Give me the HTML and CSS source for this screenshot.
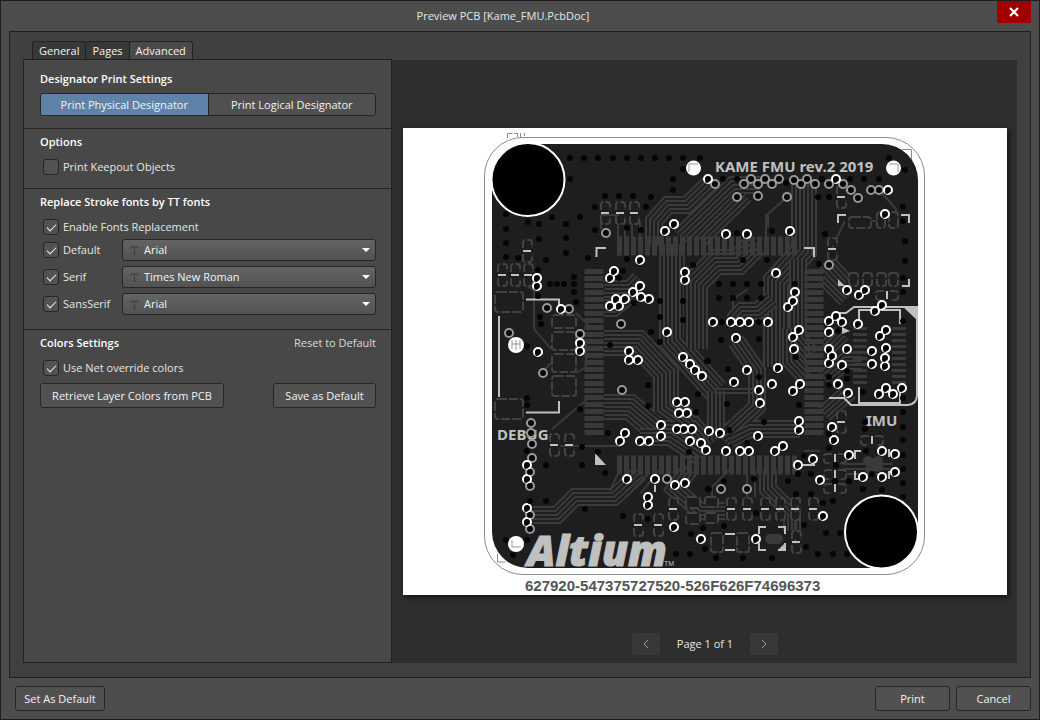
FILE: index.html
```html
<!DOCTYPE html>
<html lang="en">
<head>
    <meta charset="UTF-8">
    <meta name="viewport" content="width=device-width, initial-scale=1.0">
    <title>Preview PCB [Kame_FMU.PcbDoc]</title>
    <link rel="stylesheet" href="styles.css">
</head>
<body>
    <header class="titlebar">
        <h1>Preview PCB [Kame_FMU.PcbDoc]</h1>
        <button class="close" aria-label="Close">
            <svg width="10" height="10" viewBox="0 0 10 10"><path d="M1 1l8 8M9 1l-8 8"/></svg>
        </button>
    </header>

    <main class="content">
        <div class="settings">
            <div class="tabs" role="tablist">
                <button class="tab" role="tab">General</button>
                <button class="tab" role="tab">Pages</button>
                <button class="tab active" role="tab" aria-selected="true">Advanced</button>
            </div>
            <div class="panel">
                <section class="first">
                    <h2>Designator Print Settings</h2>
                    <div class="segmented">
                        <button class="selected">Print Physical Designator</button>
                        <button>Print Logical Designator</button>
                    </div>
                </section>
                <section class="options">
                    <h2>Options</h2>
                    <label class="check"><input type="checkbox">Print Keepout Objects</label>
                </section>
                <section class="fonts">
                    <h2>Replace Stroke fonts by TT fonts</h2>
                    <label class="check"><input type="checkbox" checked>Enable Fonts Replacement</label>
                    <div class="font-rows">
                        <div class="font-row">
                            <label class="check"><input type="checkbox" checked>Default</label>
                            <div class="select">
                                <svg class="tt" width="9" height="9" viewBox="0 0 9 9"><path d="M1 3V1h7v2M4.500 1v7M3 8h3"/></svg>
                                <select aria-label="Default font"><option>Arial</option></select>
                            </div>
                        </div>
                        <div class="font-row">
                            <label class="check"><input type="checkbox" checked>Serif</label>
                            <div class="select">
                                <svg class="tt" width="9" height="9" viewBox="0 0 9 9"><path d="M1 3V1h7v2M4.500 1v7M3 8h3"/></svg>
                                <select aria-label="Serif font"><option>Times New Roman</option></select>
                            </div>
                        </div>
                        <div class="font-row">
                            <label class="check"><input type="checkbox" checked>SansSerif</label>
                            <div class="select">
                                <svg class="tt" width="9" height="9" viewBox="0 0 9 9"><path d="M1 3V1h7v2M4.500 1v7M3 8h3"/></svg>
                                <select aria-label="SansSerif font"><option>Arial</option></select>
                            </div>
                        </div>
                    </div>
                </section>
                <section class="colors">
                    <div class="heading-row">
                        <h2>Colors Settings</h2>
                        <a href="#">Reset to Default</a>
                    </div>
                    <label class="check"><input type="checkbox" checked>Use Net override colors</label>
                    <div class="button-row">
                        <button class="btn retrieve">Retrieve Layer Colors from PCB</button>
                        <button class="btn save">Save as Default</button>
                    </div>
                </section>
            </div>
        </div>

        <div class="preview">
            <div class="sheet">
                <svg class="board" viewBox="403 129 604 467">
                    <defs>
                        <!-- two-pad part with a silk bar -->
                        <g id="cap">
                            <path class="pad" d="M-4-3v-5q0-3 3-3h3q3 0 3 3v5M-4 3v5q0 3 3 3h3q3 0 3-3V3"/>
                            <path class="silk" d="M-4 0h8"/>
                        </g>
                        <g id="capv">
                            <path class="pad" d="M-3-4h-5q-3 0-3 3v3q0 3 3 3h5M3-4h5q3 0 3 3v3q0 3-3 3H3"/>
                            <path class="silk" d="M0-4v8"/>
                        </g>
                        <path id="copper" d="M528 145H882A36 36 0 0 1 918 181V533A36 36 0 0 1 882 569H528A36 36 0 0 1 492 533V181A36 36 0 0 1 528 145Z"/>
                        <clipPath id="edge"><use href="#copper"/></clipPath>

                        <!-- trace bundles -->
                        <path id="wide" d="M604 344H638L666 374V408L690 424M672 245V342L716 392M695 350V284L716 263H738L756 245M804 180V252L776 282V368M604 408H630L656 430H692L708 448"/>
                        <path id="mid" d="M654 247V222L668 206H687L712 182M680 237L733 186H760M700 240L745 196M533 516H557L575 498H614L640 474M604 290H630L640 280M604 309H614L632 294M772 300L758 312H742L733 322M798 260V340L812 356M791 330V362L806 378M768 470V490L792 514V532M826 262L846 284M824 278L846 300M824 380L846 362H862M826 350L842 334M640 438H670L700 458M722 440L757 408V372L736 342M824 415L850 392M690 470L675 490L700 512H725M716 392V440M730 440L750 430H800"/>
                        <path id="thin" d="M524 284L534 292V330L551 350M560 447H620M552 430L590 398M576 314L588 326M555 360L545 370M576 374L586 368V345M714 390H758M714 394H758M748 290L733 300V310M768 228V215L787 198M766 245V215M880 192L896 210V220M845 222L838 236L832 250M860 222H878M601 230V216H618V257M625 228V255M632 222V255M640 222V255M755 470V498M747 475V500M730 470L712 488V500M804 452H820M843 470H890M843 465H892M843 475H888M795 516V545M620 470L610 492M648 475L632 492M660 470L640 495"/>

                        <path id="greyVias" d="M715 185h0M744 185h0M751 180h0M758 185h0M765 180h0M772 185h0M779 180h0M794 181h0M801 185h0M807 180h0M815 185h0M829 185h0M843 185h0M851 191h0M858 199h0M871 191h0M879 191h0M737 198h0M758 197h0M787 198h0M606 234h0M547 309h0M569 310h0M509 334h0M543 374h0M621 325h0M622 391h0M531 424h0M531 434h0M532 445h0M532 459h0M530 473h0M530 487h0M530 516h0M530 530h0M580 335h0M721 490h0M747 490h0M667 480h0M829 266h0"/>
                        <path id="vias" d="M665 232h0M674 225h0M640 261h0M614 272h0M610 279h0M685 273h0M685 281h0M708 180h0M537 279h0M836 180h0M888 191h0M885 215h0M726 235h0M747 235h0M790 232h0M776 274h0
                            M537 287h0M640 287h0M633 293h0M641 298h0M649 300h0M625 300h0M616 300h0M610 307h0M619 307h0M561 310h0M580 344h0M580 352h0M538 353h0M629 352h0M629 361h0M638 361h0M667 333h0M683 358h0M690 365h0M695 371h0M702 377h0M677 403h0M685 403h0M679 414h0M687 414h0M677 430h0M684 430h0M692 430h0M661 426h0M661 437h0M625 434h0M709 432h0
                            M795 293h0M793 302h0M788 308h0M713 323h0M731 323h0M740 323h0M749 323h0M768 323h0M736 339h0M799 331h0M793 338h0M794 350h0M778 369h0M747 371h0M734 383h0M772 385h0M800 385h0M793 392h0M759 391h0M760 404h0M799 422h0M799 431h0M720 434h0M758 437h0
                            M847 291h0M865 291h0M859 296h0M836 317h0M829 322h0M842 323h0M829 333h0M858 325h0M886 331h0M880 337h0M829 350h0M847 350h0M832 357h0M829 364h0M842 366h0M872 352h0M886 349h0M872 365h0M885 359h0M885 367h0M838 385h0M848 394h0M886 389h0M902 389h0M879 395h0M893 395h0M832 428h0M834 441h0M875 312h0M882 306h0
                            M620 442h0M640 442h0M649 442h0M690 442h0M701 444h0M706 451h0M627 480h0M655 480h0M675 486h0M685 484h0M648 498h0M648 506h0M674 528h0M701 540h0M527 466h0M527 480h0M527 509h0M527 523h0
                            M726 452h0M740 452h0M749 452h0M775 452h0M783 447h0M813 460h0M798 466h0M820 481h0M849 456h0M882 452h0M895 455h0M895 473h0M882 478h0M863 478h0M823 517h0M756 540h0"/>
                    </defs>

                    <path class="outline" d="M523 138.500H886A38.500 38.500 0 0 1 924.500 177V537A38.500 38.500 0 0 1 886 575.500H523A38.500 38.500 0 0 1 484.500 537V177A38.500 38.500 0 0 1 523 138.500Z"/>
                    <path class="outline" d="M507.500 139V134.500h5M514 134.500h4M517.500 134v4M520.500 134v5M524.500 134v3M902 150.500h9.500v10M497.500 555v8h8"/>
                    <use href="#copper" class="copper"/>

                    <g clip-path="url(#edge)">
                        <use href="#wide" class="trace w26"/>
                        <use href="#wide" class="gap w22"/>
                        <use href="#wide" class="trace w18"/>
                        <use href="#wide" class="gap w14"/>
                        <use href="#wide" class="trace w10"/>
                        <use href="#wide" class="gap w6"/>
                        <use href="#wide" class="trace w2"/>
                        <use href="#mid" class="trace w18"/>
                        <use href="#mid" class="gap w14"/>
                        <use href="#mid" class="trace w10"/>
                        <use href="#mid" class="gap w6"/>
                        <use href="#mid" class="trace w2"/>
                        <use href="#thin" class="trace w2"/>

                        <!-- controller pads -->
                        <path class="pins" d="M594 270V438M814 270V438"/>
                        <path class="pins" d="M617 247H797M617 466H797"/>
                        <path class="pins fine" d="M860 328V386M899 328V386"/>

                        <!-- connectors and passives -->
                        <g class="pad">
                            <rect x="495" y="293" width="28" height="20" rx="3"/>
                            <rect x="495" y="400" width="28" height="20" rx="3"/>
                            <rect x="552" y="316" width="24" height="13" rx="3"/>
                            <rect x="552" y="333" width="24" height="18" rx="3"/>
                            <rect x="552" y="355" width="24" height="18" rx="3"/>
                            <rect x="552" y="377" width="24" height="20" rx="3"/>
                            <rect x="849" y="218" width="22" height="11" rx="3"/>
                            <rect x="877" y="213" width="8" height="16" rx="3"/>
                            <rect x="889" y="213" width="9" height="16" rx="3"/>
                            <rect x="849" y="274" width="9" height="13" rx="3"/>
                            <rect x="863" y="274" width="9" height="13" rx="3"/>
                            <rect x="877" y="274" width="9" height="13" rx="3"/>
                            <rect x="889" y="274" width="9" height="13" rx="3"/>
                            <rect x="711" y="534" width="12" height="19" rx="2"/>
                            <rect x="737" y="534" width="12" height="19" rx="2"/>
                            <rect x="686" y="498" width="14" height="11" rx="2"/>
                            <rect x="686" y="514" width="14" height="11" rx="2"/>
                            <rect x="705" y="498" width="13" height="10" rx="2"/>
                            <rect x="705" y="514" width="13" height="10" rx="2"/>
                        </g>
                        <use href="#cap" x="605" y="214"/>
                        <use href="#cap" x="620" y="214"/>
                        <use href="#cap" x="634" y="214"/>
                        <use href="#cap" x="527" y="252"/>
                        <use href="#cap" x="502" y="276"/>
                        <use href="#cap" x="515" y="276"/>
                        <use href="#cap" x="528" y="276"/>
                        <use href="#cap" x="841" y="198"/>
                        <use href="#cap" x="832" y="250"/>
                        <use href="#cap" x="841" y="423"/>
                        <use href="#cap" x="554" y="446"/>
                        <use href="#cap" x="569" y="446"/>
                        <use href="#cap" x="638" y="526"/>
                        <use href="#cap" x="658" y="526"/>
                        <use href="#cap" x="673" y="510"/>
                        <use href="#cap" x="731" y="510"/>
                        <use href="#cap" x="747" y="510"/>
                        <use href="#cap" x="765" y="510"/>
                        <use href="#cap" x="780" y="510"/>
                        <use href="#cap" x="795" y="510"/>
                        <use href="#cap" x="813" y="510"/>
                        <use href="#cap" x="796" y="543"/>
                        <use href="#capv" x="835" y="459"/>
                        <use href="#capv" x="835" y="475"/>
                        <use href="#capv" x="835" y="489"/>
                        <use href="#capv" x="872" y="441"/>
                        <use href="#capv" x="887" y="296"/>
                        <path class="blob" d="M770 540h8M868 462l10 6M878 462l-8 8"/>

                        <!-- silkscreen -->
                        <path class="silk" d="M526 300.500H559V310M499 317V398M526 413.500H559V402M596.500 258V249H606M804 249H814V258M838 224V216H846M901 216H909V224M909 280V287H902M759 535V528H766M778 528H785V535M759 544V551H766M778 551H785V544M725 535H735M725 551H735M655 486V493M855 460V452H861M855 472V480H861M889 450V458M889 472V480M803 466H815"/>
                        <path class="silk" d="M829 399H844L851 406H908Q917 405 917 396V310M837 314H846L854 308H917M859 325V311H900V325M859 388V404H900V388"/>
                        <path class="silk-fill" d="M902 307H918V322ZM838 280V287H845ZM595 454V466H606ZM842 328V335L850 332ZM785 544V551H778Z"/>
                        <text class="silk-text" x="715" y="173">KAME FMU rev.2 2019</text>
                        <text class="silk-text" x="497" y="441">DEBUG</text>
                        <text class="silk-text" x="866" y="427">IMU</text>

                        <use href="#greyVias" class="ring grey"/>
                        <use href="#vias" class="ring"/>
                        <use href="#greyVias" class="drill"/>
                        <use href="#vias" class="drill"/>
                        <use href="#vias" class="nick" x="-1" y="2"/>

                        <path class="drill" d="M570 159h0M584 159h0M598 159h0M613 159h0M627 159h0M641 159h0M655 159h0M669 159h0M683 159h0M700 159h0M683 170h0M673 180h0M673 191h0M570 180h0M605 197h0M619 197h0M633 197h0M651 198h0M646 208h0M595 208h0M506 215h0M528 223h0M539 225h0M552 218h0M580 218h0M566 225h0M506 230h0M539 240h0M566 239h0M506 244h0M566 254h0M506 258h0M518 259h0M546 261h0M588 259h0M595 231h0M627 229h0M641 231h0M627 260h0M538 271h0M623 272h0M574 278h0M693 266h0M619 279h0
                            M889 159h0M905 171h0M723 180h0M737 180h0M822 180h0M850 180h0M864 180h0M879 180h0M786 184h0M818 198h0M829 198h0M903 208h0M903 222h0M905 242h0M905 262h0M825 235h0M772 232h0M737 234h0M743 261h0M767 261h0M819 265h0M903 279h0
                            M550 285h0M557 285h0M564 285h0M574 285h0M574 293h0M576 303h0M540 318h0M541 325h0M527 347h0M610 346h0M660 302h0M683 302h0M660 318h0M683 321h0M651 333h0M660 343h0M634 304h0M708 362h0M648 386h0M698 395h0M648 407h0M580 410h0M527 399h0M527 406h0M608 434h0M696 413h0M538 297h0
                            M719 285h0M733 285h0M747 285h0M761 285h0M719 299h0M733 299h0M747 299h0M761 299h0M795 285h0M722 323h0M759 323h0M721 341h0M759 340h0M707 362h0M728 370h0M759 378h0M727 405h0M799 406h0M764 423h0M729 431h0M796 358h0M829 378h0M847 372h0M847 380h0M829 386h0M903 293h0M903 322h0M838 332h0M903 399h0M903 413h0M903 428h0M865 423h0M865 430h0M829 435h0M863 393h0
                            M527 452h0M598 453h0M582 448h0M546 466h0M582 466h0M605 474h0M530 502h0M546 502h0M585 510h0M623 517h0M648 520h0M506 541h0M527 541h0M513 556h0M563 541h0M676 555h0M690 555h0M705 550h0M691 535h0M703 529h0M689 453h0M708 490h0
                            M747 444h0M811 475h0M804 457h0M798 475h0M788 482h0M754 480h0M724 482h0M709 490h0M796 495h0M811 495h0M823 504h0M833 502h0M756 514h0M724 527h0M804 526h0M826 534h0M840 534h0M806 548h0M818 555h0M833 555h0M847 555h0M716 559h0M743 559h0M772 559h0M829 449h0M836 466h0M835 482h0M849 482h0M863 490h0M882 491h0M903 441h0M903 456h0M903 470h0M903 484h0M903 498h0M866 452h0M872 475h0"/>
                    </g>

                    <!-- fiducials and mounting holes -->
                    <g class="fiducial">
                        <circle cx="693.500" cy="169" r="7.500"/>
                        <circle cx="893.500" cy="169" r="7.500"/>
                        <circle cx="516" cy="346" r="8"/>
                        <circle cx="516" cy="545" r="8"/>
                        <path d="M689 173v-8h9M889 165h9v8M512 541v7h9M512 341v9M516 341v10M520 341v9M512 345h8"/>
                    </g>
                    <circle class="hole" cx="528" cy="180.500" r="36.500"/>
                    <circle class="hole" cx="881.500" cy="533" r="36.500"/>

                    <text class="logo" x="527" y="567">Altium</text>
                    <text class="tm" x="664" y="567">TM</text>
                    <text class="serial" x="525" y="592">627920-547375727520-526F626F74696373</text>
                </svg>
            </div>
            <div class="pager">
                <button aria-label="Previous page"><svg width="6" height="10" viewBox="0 0 6 10"><path d="M5 1L1 5l4 4"/></svg></button>
                <span>Page 1 of 1</span>
                <button aria-label="Next page"><svg width="6" height="10" viewBox="0 0 6 10"><path d="M1 1l4 4-4 4"/></svg></button>
            </div>
        </div>
    </main>

    <footer class="footer">
        <button class="btn set-default">Set As Default</button>
        <button class="btn action">Print</button>
        <button class="btn action">Cancel</button>
    </footer>
</body>
</html>
```
FILE: styles.css
```css
* {
    box-sizing: border-box;
}
body {
    margin: 0;
    min-height: 100vh;
    display: flex;
    flex-direction: column;
    border: 1px solid #1e1e1e;
    background-color: #4d4d4d;
    color: #e6e6e6;
    font-family: "Open Sans", "Noto Sans", sans-serif;
    font-size: 11px;
    line-height: 20px;
}
button, select {
    font: inherit;
    color: #f2f2f2;
    margin: 0;
    padding: 0;
}
svg {
    display: block;
}
.titlebar {
    display: flex;
    height: 30px;
    padding: 0 8px;
}
.titlebar h1 {
    flex: 1;
    margin: 0;
    font-size: 11px;
    font-weight: normal;
    line-height: 30px;
    text-align: center;
}
.close {
    width: 34px;
    height: 22px;
    border: none;
    border-radius: 0 0 2px 2px;
    background-color: #a00000;
    display: flex;
    align-items: center;
    justify-content: center;
}
.close path {
    stroke: #fff;
    stroke-width: 2;
}

.content {
    flex: 1;
    display: grid;
    grid-template-columns: 369px 1fr;
    margin: 0 8px;
    padding: 9px 13px 14px;
    border: 1px solid #1f1f1f;
    background-color: #404040;
}
.settings {
    display: flex;
    flex-direction: column;
}
.tabs {
    display: flex;
    height: 18px;
    padding-left: 9px;
}
.tab {
    padding: 0 6px;
    border: 1px solid #222;
    border-bottom: none;
    border-radius: 3px 3px 0 0;
    background-color: #383838;
    line-height: 18px;
}
.tab + .tab {
    margin-left: -1px;
}
.tab.active {
    background-color: #4a4a4a;
}
.panel {
    flex: 1;
    border: 1px solid #222;
    background-color: #484848;
}
section {
    padding: 3px 15px 0 16px;
    border-bottom: 1px solid #242424;
}
.first {
    padding-top: 9px;
    padding-bottom: 12px;
}
.options {
    padding-bottom: 11px;
}
.fonts {
    padding-bottom: 14px;
}
.colors {
    border-bottom: none;
}
h2 {
    margin: 0;
    font-size: 11px;
    font-weight: 600;
    line-height: 20px;
    color: #fff;
}
.segmented {
    display: flex;
    height: 23px;
    margin-top: 4px;
    border: 1px solid #262626;
    border-radius: 3px;
    overflow: hidden;
}
.segmented button {
    flex: 1;
    border: none;
    background-color: #505050;
}
.segmented .selected {
    background-color: #5f83a8;
    border-right: 1px solid #262626;
}
.check {
    display: flex;
    align-items: center;
    height: 20px;
    gap: 4px;
    padding-left: 3px;
}
h2 + .check, .heading-row + .check {
    margin-top: 5px;
}
.check input {
    appearance: none;
    width: 16px;
    height: 16px;
    margin: 0;
    border: 1px solid #262626;
    border-radius: 3px;
    background-color: #525252;
}
.check input:checked::after {
    content: "";
    display: block;
    width: 8px;
    height: 4px;
    margin: 4px 3px;
    border-left: 1px solid #f0f0f0;
    border-bottom: 1px solid #f0f0f0;
    transform: rotate(-45deg);
}
.font-rows {
    display: grid;
    gap: 5px;
    margin-top: 2px;
}
.font-row {
    display: grid;
    grid-template-columns: 82px 1fr;
    align-items: center;
}
.select {
    position: relative;
}
.select select {
    display: block;
    appearance: none;
    width: 100%;
    height: 22px;
    padding: 0 22px 0 21px;
    border: 1px solid #262626;
    border-radius: 3px;
    background: linear-gradient(#646464, #525252);
}
.select .tt {
    position: absolute;
    left: 8px;
    top: 7px;
    fill: none;
    stroke: #3c3c3c;
}
.select::after {
    content: "";
    position: absolute;
    right: 6px;
    top: 9px;
    border: 4px solid transparent;
    border-top-color: #fff;
    border-bottom: none;
}
.heading-row {
    display: flex;
    justify-content: space-between;
}
.heading-row a {
    color: #dcdcdc;
    text-decoration: none;
}
.button-row {
    display: flex;
    justify-content: space-between;
    margin-top: 5px;
}
.btn {
    height: 25px;
    border: 1px solid #262626;
    border-radius: 3px;
    background-color: #515151;
}
.retrieve {
    width: 184px;
}
.save {
    width: 103px;
}

.preview {
    display: grid;
    grid-template-rows: 1fr auto 1fr;
    margin-top: 19px;
    padding: 8px 10px 8px 11px;
    background-color: #2e2e2e;
}
.sheet {
    grid-row: 2;
    background-color: #fff;
    box-shadow: 2px 2px 5px #111;
}
.pager {
    grid-row: 3;
    display: flex;
    align-self: end;
    justify-content: center;
    align-items: center;
    gap: 17px;
}
.pager button {
    display: flex;
    align-items: center;
    justify-content: center;
    width: 28px;
    height: 22px;
    border: none;
    border-radius: 2px;
    background-color: #383838;
}
.pager path {
    fill: none;
    stroke: #a0a0a0;
}
.footer {
    display: flex;
    gap: 6px;
    padding: 8px 8px 8px 14px;
}
.set-default {
    width: 90px;
    margin-right: auto;
}
.action {
    width: 75px;
}

/* board drawing */
.board {
    width: 100%;
    height: auto;
    fill: none;
}
.outline {
    stroke: #8c8c8c;
}
.copper {
    fill: #1e1e1e;
}
.trace {
    stroke: #3a3a3a;
}
.gap {
    stroke: #1f1f1f;
}
.w2 { stroke-width: 2; }
.w6 { stroke-width: 6; }
.w10 { stroke-width: 10; }
.w14 { stroke-width: 14; }
.w18 { stroke-width: 18; }
.w22 { stroke-width: 22; }
.w26 { stroke-width: 26; }
.pins {
    stroke: #3a3a3a;
    stroke-width: 19;
    stroke-dasharray: 5 2;
}
.pins.fine {
    stroke-width: 14;
    stroke-dasharray: 3 3;
}
.pad {
    fill: #1e1e1e;
    stroke: #424242;
    stroke-width: 2;
    stroke-dasharray: 9 2;
}
.blob {
    stroke: #3a3a3a;
    stroke-width: 10;
    stroke-linecap: round;
}
.silk {
    stroke: #c0c0c0;
    stroke-width: 2;
}
.silk-fill {
    fill: #c0c0c0;
}
.silk-text {
    fill: #c0c0c0;
    font: bold 15px "Noto Sans", sans-serif;
}
.ring {
    stroke: #fff;
    stroke-width: 10;
    stroke-linecap: round;
}
.ring.grey {
    stroke: #999;
}
.drill {
    stroke: #050505;
    stroke-width: 6;
    stroke-linecap: round;
}
.nick {
    stroke: #050505;
    stroke-width: 4;
    stroke-linecap: round;
}
.fiducial {
    fill: #fff;
}
.fiducial path {
    fill: none;
    stroke: #999;
}
.hole {
    fill: #000;
    stroke: #fff;
    stroke-width: 2;
}
.logo {
    fill: #c0c0c0;
    stroke: #c0c0c0;
    font: italic 800 42px "Open Sans", sans-serif;
}
.tm {
    fill: #c0c0c0;
    font: 7px "Liberation Sans", sans-serif;
}
.serial {
    fill: #555;
    font: bold 15px "Liberation Sans", sans-serif;
}
```
